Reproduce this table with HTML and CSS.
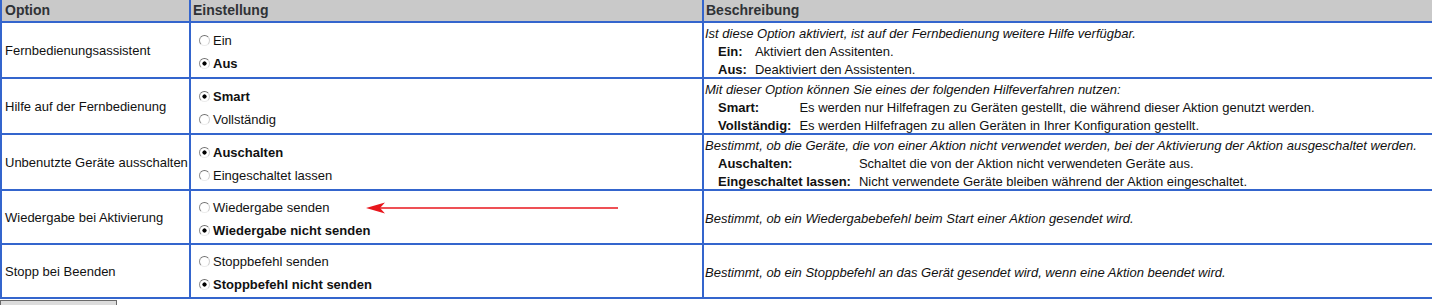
FILE: index.html
```html
<!DOCTYPE html>
<html lang="de">
<head>
<meta charset="utf-8">
<title>Optionen</title>
<link rel="stylesheet" href="styles.css">
</head>
<body>
<div class="settings">
  <div class="row head">
    <div class="cell">Option</div>
    <div class="cell">Einstellung</div>
    <div class="cell">Beschreibung</div>
  </div>

  <div class="row tall">
    <div class="cell opt">Fernbedienungsassistent</div>
    <div class="cell choices">
      <label class="choice"><input type="radio" name="r1">Ein</label>
      <label class="choice on"><input type="radio" name="r1" checked>Aus</label>
    </div>
    <div class="cell desc">
      <p class="lead">Ist diese Option aktiviert, ist auf der Fernbedienung weitere Hilfe verfügbar.</p>
      <dl class="terms">
        <dt>Ein:</dt><dd>Aktiviert den Assitenten.</dd>
        <dt>Aus:</dt><dd>Deaktiviert den Assistenten.</dd>
      </dl>
    </div>
  </div>

  <div class="row tall">
    <div class="cell opt">Hilfe auf der Fernbedienung</div>
    <div class="cell choices">
      <label class="choice on"><input type="radio" name="r2" checked>Smart</label>
      <label class="choice"><input type="radio" name="r2">Vollständig</label>
    </div>
    <div class="cell desc">
      <p class="lead">Mit dieser Option können Sie eines der folgenden Hilfeverfahren nutzen:</p>
      <dl class="terms">
        <dt>Smart:</dt><dd>Es werden nur Hilfefragen zu Geräten gestellt, die während dieser Aktion genutzt werden.</dd>
        <dt>Vollständig:</dt><dd>Es werden Hilfefragen zu allen Geräten in Ihrer Konfiguration gestellt.</dd>
      </dl>
    </div>
  </div>

  <div class="row tall">
    <div class="cell opt">Unbenutzte Geräte ausschalten</div>
    <div class="cell choices">
      <label class="choice on"><input type="radio" name="r3" checked>Auschalten</label>
      <label class="choice"><input type="radio" name="r3">Eingeschaltet lassen</label>
    </div>
    <div class="cell desc">
      <p class="lead">Bestimmt, ob die Geräte, die von einer Aktion nicht verwendet werden, bei der Aktivierung der Aktion ausgeschaltet werden.</p>
      <dl class="terms">
        <dt>Auschalten:</dt><dd>Schaltet die von der Aktion nicht verwendeten Geräte aus.</dd>
        <dt>Eingeschaltet lassen:</dt><dd>Nicht verwendete Geräte bleiben während der Aktion eingeschaltet.</dd>
      </dl>
    </div>
  </div>

  <div class="row short">
    <div class="cell opt">Wiedergabe bei Aktivierung</div>
    <div class="cell choices">
      <label class="choice"><input type="radio" name="r4">Wiedergabe senden</label>
      <label class="choice on"><input type="radio" name="r4" checked>Wiedergabe nicht senden</label>
    </div>
    <div class="cell desc">
      <p class="lead">Bestimmt, ob ein Wiedergabebefehl beim Start einer Aktion gesendet wird.</p>
    </div>
  </div>

  <div class="row short">
    <div class="cell opt">Stopp bei Beenden</div>
    <div class="cell choices">
      <label class="choice"><input type="radio" name="r5">Stoppbefehl senden</label>
      <label class="choice on"><input type="radio" name="r5" checked>Stoppbefehl nicht senden</label>
    </div>
    <div class="cell desc">
      <p class="lead">Bestimmt, ob ein Stoppbefehl an das Gerät gesendet wird, wenn eine Aktion beendet wird.</p>
    </div>
  </div>
</div>

<button class="save" type="button" aria-label="Speichern"></button>

<svg class="arrow" width="260" height="14" viewBox="0 0 260 14" aria-hidden="true">
  <line x1="14" y1="7" x2="253" y2="7" stroke="#e8161c" stroke-width="1.6"/>
  <polygon points="1,7 20,1.5 15,7 20,12.5" fill="#e8161c"/>
</svg>
</body>
</html>
```
FILE: styles.css
```css
html, body {
  margin: 0;
  padding: 0;
  overflow: hidden;
  background: #fff;
}

body {
  position: relative;
  font-family: "Liberation Sans", Arial, sans-serif;
  font-size: 13px;
  color: #111;
}

.settings {
  display: flex;
  flex-direction: column;
  gap: 2px;
  background: #3465cd;
  padding: 0 0 2px 2px;
  width: 1432px;
  box-sizing: border-box;
}

.row {
  display: grid;
  grid-template-columns: 187px 511px 1fr;
  grid-template-rows: minmax(0, 1fr);
  gap: 2px;
  flex: none;
}

.cell {
  background: #fff;
  box-sizing: border-box;
  min-height: 0;
}

.head {
  height: 21px;
}

.head .cell {
  background: #c9c9c9;
  color: #2f3236;
  font-weight: bold;
  font-size: 14px;
  line-height: 21px;
  padding-left: 3px;
}

.head .cell:nth-child(2) { padding-left: 2px; }
.head .cell:nth-child(3) { padding-left: 2px; }

.tall { height: 54px; }
.short { height: 52px; }

.opt {
  display: flex;
  align-items: center;
  padding-left: 3px;
  white-space: nowrap;
}

.choices {
  display: flex;
  flex-direction: column;
  justify-content: center;
  padding: 4px 0 0 8px;
}

.choice {
  display: flex;
  align-items: center;
  height: 23px;
  flex: none;
}

.choice.on {
  font-weight: bold;
}

.choice input {
  appearance: none;
  -webkit-appearance: none;
  width: 11px;
  height: 11px;
  margin: 0 3px 1px 0;
  border: 1px solid;
  border-color: #6f6f6f #cfcfcf #ececec #8f8f8f;
  border-radius: 50%;
  background: #fff;
  box-sizing: border-box;
  flex: none;
}

.choice input:checked {
  background: radial-gradient(circle, #000 0 1.8px, #fff 2.4px);
}

.desc {
  display: flex;
  flex-direction: column;
  justify-content: center;
  padding: 3px 0 0 1px;
  white-space: nowrap;
}

.lead {
  margin: 0;
  font-style: italic;
  line-height: 18px;
  flex: none;
}

.terms {
  margin: 0;
  padding-left: 13px;
  display: grid;
  grid-template-columns: max-content 1fr;
  column-gap: 8px;
  line-height: 18px;
  flex: none;
}

.terms dt {
  font-weight: bold;
}

.terms dd {
  margin: 0;
}

.save {
  display: block;
  margin: 1px 0 0 0;
  width: 117px;
  height: 24px;
  background: #dcdcdc;
  border: 1px solid #6a6a6a;
}

.arrow {
  position: absolute;
  left: 365px;
  top: 201px;
}
```
